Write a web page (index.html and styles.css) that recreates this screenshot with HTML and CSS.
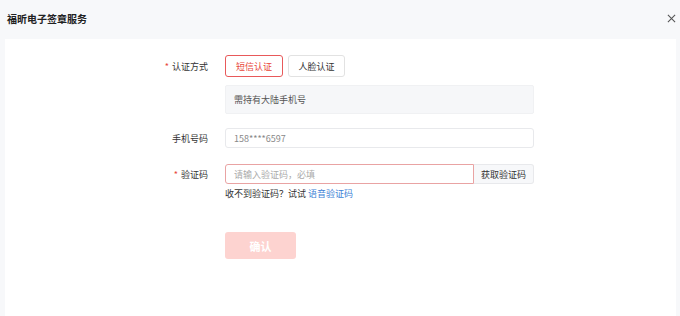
FILE: index.html
```html
<!DOCTYPE html>
<html lang="zh-CN">
<head>
    <meta charset="UTF-8">
    <title>福昕电子签章服务</title>
    <link rel="stylesheet" href="styles.css">
</head>
<body>
    <div class="header">
        <h1 class="title">福昕电子签章服务</h1>
        <button class="close" aria-label="关闭">
            <svg width="9" height="9" viewBox="0 0 10 10"><path d="M1 1L9 9M9 1L1 9" stroke="#555" stroke-width="1.2" fill="none"/></svg>
        </button>
    </div>
    <div class="panel">
        <div class="form">
            <div class="row row-method">
                <label class="label required">认证方式</label>
                <div class="control tabs">
                    <button class="tab active">短信认证</button>
                    <button class="tab">人脸认证</button>
                </div>
            </div>
            <div class="row row-info">
                <div class="label"></div>
                <div class="control info">需持有大陆手机号</div>
            </div>
            <div class="row row-phone">
                <label class="label">手机号码</label>
                <div class="control">
                    <input class="input" type="text" value="158****6597" readonly>
                </div>
            </div>
            <div class="row row-code">
                <label class="label required">验证码</label>
                <div class="control code-group">
                    <input class="input input-error" type="text" placeholder="请输入验证码，必填">
                    <button class="code-btn">获取验证码</button>
                </div>
            </div>
            <div class="row row-hint">
                <div class="label"></div>
                <div class="control hint">收不到验证码？试试 <a href="#" class="link">语音验证码</a></div>
            </div>
            <div class="row row-submit">
                <div class="label"></div>
                <div class="control">
                    <button class="submit" disabled>确认</button>
                </div>
            </div>
        </div>
    </div>
</body>
</html>
```

FILE: styles.css
```css
* {
    margin: 0;
    padding: 0;
    box-sizing: border-box;
}

body {
    background: #f7f8fa;
    color: #333;
    font-family: "Noto Sans CJK SC", "Noto Sans", sans-serif;
    font-size: 9px;
    height: 316px;
    overflow: hidden;
    display: flex;
    flex-direction: column;
}

.header {
    height: 39px;
    display: flex;
    align-items: center;
    justify-content: space-between;
    padding: 0 2px 3px 7px;
}

.title {
    font-size: 10px;
    font-weight: 600;
    color: #222;
}

.close {
    border: none;
    background: none;
    width: 14px;
    height: 14px;
    display: flex;
    align-items: center;
    justify-content: center;
    cursor: pointer;
}

.panel {
    flex: 1;
    background: #fff;
    margin: 0 4px 0 5px;
    padding-top: 16px;
}

.row {
    display: flex;
    align-items: center;
}

.label {
    width: 203px;
    flex-shrink: 0;
    text-align: right;
    margin-right: 17px;
    color: #333;
}

.required::before {
    content: "*";
    color: #e8463a;
    margin-right: 3px;
}

.control {
    width: 309px;
}

.tabs {
    display: flex;
    gap: 5px;
}

.tab {
    height: 22px;
    width: 57px;
    border: 1px solid #e2e2e2;
    border-radius: 3px;
    background: #fff;
    color: #333;
    font-family: inherit;
    font-size: 9px;
}

.tab.active {
    width: 58px;
    border-color: #e8595a;
    color: #e8463a;
}

.row-info {
    margin-top: 8px;
}

.info {
    height: 29px;
    background: #f6f7f9;
    border: 1px solid #f0f1f3;
    border-radius: 2px;
    padding-left: 8px;
    display: flex;
    align-items: center;
    color: #555;
}

.row-phone {
    margin-top: 14px;
}

.input {
    width: 100%;
    height: 20px;
    border: 1px solid #e8e9ec;
    border-radius: 3px;
    padding: 0 8px;
    font-family: inherit;
    font-size: 9px;
    color: #888;
    outline: none;
}

.input::placeholder {
    color: #aaa;
}

.row-code {
    margin-top: 16px;
}

.code-group {
    display: flex;
}

.input-error {
    flex: 1;
    border-color: #e9a3a3;
    border-radius: 3px 0 0 3px;
}

.code-btn {
    width: 60px;
    height: 20px;
    border: 1px solid #e8e9ec;
    border-left: none;
    border-radius: 0 3px 3px 0;
    background: #f7f8fa;
    color: #333;
    font-family: inherit;
    font-size: 9px;
}

.row-hint {
    margin-top: 3px;
}

.hint {
    color: #333;
}

.link {
    color: #3d7fd6;
    text-decoration: none;
}

.row-submit {
    margin-top: 32px;
}

.submit {
    width: 71px;
    height: 27px;
    border: none;
    border-radius: 3px;
    background: #fdd3d0;
    color: #fff;
    font-family: inherit;
    font-size: 11px;
    font-weight: bold;
}
```
